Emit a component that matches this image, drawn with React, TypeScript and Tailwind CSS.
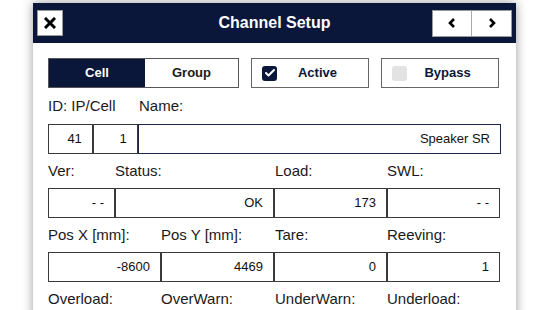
import { Check } from "lucide-react";

const FONT = { fontFamily: '"Liberation Sans", Arial, sans-serif' };

type Field = { value: string; w: string };

function Label({ text, w }: { text: string; w: string }) {
  return <div className={`${w} text-[15px] text-[#1a1a1a]`}>{text}</div>;
}

function Box({ value, w, navy }: Field & { navy?: boolean }) {
  return (
    <div
      className={`${w} flex h-[30px] items-center justify-end border bg-white pr-[10px] text-[13px] text-[#111] ${
        navy ? "border-[#1c2746]" : "border-[#3a3a3a]"
      }`}
    >
      {value}
    </div>
  );
}

function LabelRow({ labels, h = "h-[34px]" }: { labels: [string, string][]; h?: string }) {
  return (
    <div className={`flex ${h} items-center`}>
      {labels.map(([text, w]) => (
        <Label key={text} text={text} w={w} />
      ))}
    </div>
  );
}

function BoxRow({ fields }: { fields: Field[] }) {
  return (
    <div className="flex">
      {fields.map((f, i) => (
        <Box key={i} {...f} />
      ))}
    </div>
  );
}

export default function App() {
  return (
    <div className="h-[310px] w-[550px] overflow-hidden bg-white" style={FONT}>
      <div className="ml-[33px] mt-[3px] w-[483px] bg-white pb-6 shadow-[0_0_10px_rgba(0,0,0,0.4)]">
        {/* header */}
        <div className="relative flex h-[40px] items-center justify-between bg-[#0a173a] px-[4px]">
          <button className="flex h-[26px] w-[26px] items-center justify-center border border-[#9a9a9a] bg-white">
            <svg width="12" height="12" viewBox="0 0 12 12">
              <path d="M2 2 L10 10 M10 2 L2 10" stroke="#000" strokeWidth="3" strokeLinecap="square" />
            </svg>
          </button>
          <div className="absolute inset-x-0 text-center text-[16px] font-bold text-white pointer-events-none">
            Channel Setup
          </div>
          <div className="flex h-[27px] border border-[#9a9a9a] bg-white">
            <div className="flex w-[39px] items-center justify-center border-r border-[#aaa]">
              <svg width="10" height="12" viewBox="0 0 10 12">
                <path d="M7 2 L3 6 L7 10" fill="none" stroke="#000" strokeWidth="2.6" />
              </svg>
            </div>
            <div className="flex w-[39px] items-center justify-center">
              <svg width="10" height="12" viewBox="0 0 10 12">
                <path d="M3 2 L7 6 L3 10" fill="none" stroke="#000" strokeWidth="2.6" />
              </svg>
            </div>
          </div>
        </div>

        <div className="px-[15px] pt-[15px]">
          {/* tabs / toggles */}
          <div className="flex h-[30px] gap-[12px]">
            <div className="flex w-[191px] border border-[#555]">
              <div className="flex w-[96px] items-center justify-center bg-[#0a173a] text-[13px] font-bold text-white">
                Cell
              </div>
              <div className="flex flex-1 items-center justify-center bg-white text-[13px] font-bold text-[#1a1a1a]">
                Group
              </div>
            </div>
            <div className="flex w-[118px] items-center border border-[#666] px-[10px]">
              <div className="flex h-[15px] w-[15px] items-center justify-center rounded-[3px] bg-[#0a173a]">
                <Check className="h-[12px] w-[12px] text-white" strokeWidth={4} />
              </div>
              <div className="flex-1 text-center text-[13px] font-bold text-[#0a173a]">Active</div>
            </div>
            <div className="flex w-[118px] items-center border border-[#666] px-[10px]">
              <div className="h-[15px] w-[15px] rounded-[3px] bg-[#e3e3e3]" />
              <div className="flex-1 text-center text-[13px] font-bold text-[#0a173a]">Bypass</div>
            </div>
          </div>

          <LabelRow
            h="h-[36px]"
            labels={[
              ["ID: IP/Cell", "w-[91px]"],
              ["Name:", "flex-1"],
            ]}
          />
          <div className="flex">
            <Box value="41" w="w-[45px]" />
            <Box value="1" w="w-[45px]" />
            <Box value="Speaker SR" w="w-[365px]" navy />
          </div>

          <LabelRow
            labels={[
              ["Ver:", "w-[67px]"],
              ["Status:", "w-[160px]"],
              ["Load:", "w-[112px]"],
              ["SWL:", "flex-1"],
            ]}
          />
          <BoxRow
            fields={[
              { value: "- -", w: "w-[67px]" },
              { value: "OK", w: "w-[159px]" },
              { value: "173", w: "w-[113px]" },
              { value: "- -", w: "w-[113px]" },
            ]}
          />

          <LabelRow
            labels={[
              ["Pos X [mm]:", "w-[113px]"],
              ["Pos Y [mm]:", "w-[114px]"],
              ["Tare:", "w-[112px]"],
              ["Reeving:", "flex-1"],
            ]}
          />
          <BoxRow
            fields={[
              { value: "-8600", w: "w-[113px]" },
              { value: "4469", w: "w-[113px]" },
              { value: "0", w: "w-[113px]" },
              { value: "1", w: "w-[113px]" },
            ]}
          />

          <LabelRow
            labels={[
              ["Overload:", "w-[113px]"],
              ["OverWarn:", "w-[114px]"],
              ["UnderWarn:", "w-[112px]"],
              ["Underload:", "flex-1"],
            ]}
          />
        </div>
      </div>
    </div>
  );
}
